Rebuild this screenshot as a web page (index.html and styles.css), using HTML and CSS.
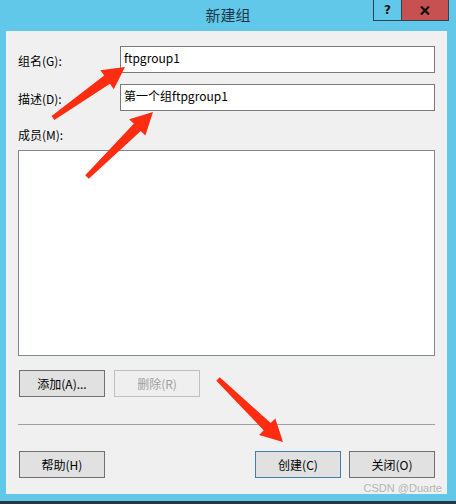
FILE: index.html
```html
<!DOCTYPE html>
<html lang="zh">
<head>
<meta charset="utf-8">
<title>新建组</title>
<link rel="stylesheet" href="styles.css">
</head>
<body>
<div class="window">
  <div class="titlebar">
    <div class="title">新建组</div>
    <div class="controls">
      <div class="ctl help">?</div>
      <div class="ctl close">
        <svg width="10" height="9" viewBox="0 0 10 9"><path d="M1 0.5 L9 8.5 M9 0.5 L1 8.5" stroke="#111" stroke-width="2.2" fill="none"/></svg>
      </div>
    </div>
  </div>
  <div class="client">
    <div class="row">
      <label class="lbl">组名(G):</label>
      <div class="input">ftpgroup1</div>
    </div>
    <div class="row row2">
      <label class="lbl">描述(D):</label>
      <div class="input">第一个组ftpgroup1</div>
    </div>
    <div class="members-label">成员(M):</div>
    <div class="listbox"></div>
    <div class="btnrow">
      <div class="btn">添加(A)...</div>
      <div class="btn disabled">删除(R)</div>
    </div>
    <div class="sep"></div>
    <div class="footer">
      <div class="btn">帮助(H)</div>
      <div class="spacer"></div>
      <div class="btn default">创建(C)</div>
      <div class="btn">关闭(O)</div>
    </div>
  </div>
  <div class="watermark">CSDN @Duarte</div>
  <svg class="arrows" width="456" height="504" viewBox="0 0 456 504">
    <polygon fill="#fe2c10" points="51.6,116.0 104.2,75.6 100.4,70.2 125,67 113.8,89.2 109.9,83.8 54.4,120.0"/>
    <polygon fill="#fe2c10" points="85.2,175.2 133.8,123.8 129.2,119.2 153,112 145.4,135.6 140.8,131.0 88.8,178.8"/>
    <polygon fill="#fe2c10" points="219.7,377.2 270.7,423.1 275.3,418.4 283,442 259.1,435.0 263.7,430.3 216.3,380.8"/>
  </svg>
</div>
</body>
</html>
```

FILE: styles.css
```css
html, body {
  margin: 0;
  padding: 0;
}
body {
  width: 456px;
  height: 504px;
  overflow: hidden;
  font-family: "Noto Sans CJK SC", "Noto Sans", sans-serif;
  font-size: 12px;
  color: #000;
}
.window {
  position: relative;
  width: 456px;
  height: 504px;
  box-sizing: border-box;
  background: #62c8ea;
  padding: 0 9px 7px 6px;
  border-bottom: 3px solid #2a3743;
  display: flex;
  flex-direction: column;
}
.titlebar {
  height: 31px;
  flex: none;
  position: relative;
  margin: 0 -9px 0 -6px;
}
.title {
  text-align: center;
  font-size: 15px;
  line-height: 30px;
  color: #1c3848;
}
.controls {
  position: absolute;
  top: 0;
  right: 7px;
  display: flex;
  height: 21px;
  border: 1px solid #2c4450;
  border-top: none;
  box-sizing: border-box;
}
.ctl {
  height: 20px;
  display: flex;
  align-items: center;
  justify-content: center;
}
.help {
  width: 27px;
  border-right: 1px solid #2c4450;
  font-family: "DejaVu Sans", sans-serif;
  font-weight: bold;
  font-size: 12px;
  color: #111;
}
.close {
  width: 46px;
  background: #c75050;
}
.client {
  flex: 1;
  background: #f0f0f0;
  padding: 15px 12px 0 12px;
  display: flex;
  flex-direction: column;
}
.row {
  display: flex;
  align-items: center;
  height: 27px;
}
.row2 {
  margin-top: 11px;
}
.lbl {
  width: 102px;
  flex: none;
  padding-top: 2px;
}
.input {
  flex: 1;
  height: 27px;
  box-sizing: border-box;
  border: 1px solid #7a7a7a;
  background: #fff;
  padding: 3px 3px 0 3px;
  line-height: 16px;
  font-size: 12px;
}
.members-label {
  margin-top: 15px;
  line-height: 17px;
  height: 17px;
}
.listbox {
  margin-top: 7px;
  height: 206px;
  box-sizing: border-box;
  border: 1px solid #828790;
  background: #fff;
}
.btnrow {
  margin-top: 14px;
  display: flex;
  gap: 9px;
  padding-left: 1px;
}
.btn {
  width: 86px;
  height: 27px;
  box-sizing: border-box;
  border: 1px solid #707070;
  background: #e1e1e1;
  display: flex;
  align-items: center;
  justify-content: center;
  line-height: 16px;
}
.btn.disabled {
  border-color: #bfbfbf;
  background: #efefef;
  color: #a0a0a0;
}
.btn.default {
  border-color: #3c7fb1;
}
.sep {
  margin-top: 27px;
  height: 1px;
  background: #a0a0a0;
}
.footer {
  margin-top: 26px;
  display: flex;
  gap: 8px;
  padding-left: 1px;
}
.spacer {
  flex: 1;
}
.watermark {
  position: absolute;
  right: 14px;
  bottom: 7px;
  font-family: "Liberation Sans", sans-serif;
  font-size: 11px;
  line-height: 12px;
  color: #b5b5b5;
}
.arrows {
  position: absolute;
  left: 0;
  top: 0;
  pointer-events: none;
}
```
